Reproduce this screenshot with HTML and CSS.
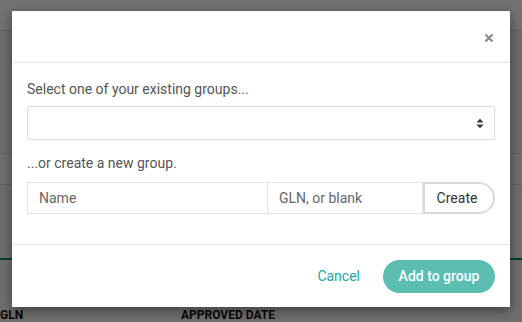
FILE: index.html
```html
<!DOCTYPE html>
<html>
<head>
<meta charset="utf-8">
<link rel="stylesheet" href="styles.css">
</head>
<body>
<div class="page">
  <div class="topbar"></div>
  <div class="area1"></div>
  <div class="band"></div>
  <div class="area2"></div>
  <div class="tabline"></div>
  <div class="spacer"></div>
  <div class="thead">
    <span class="th th-gln">GLN</span>
    <span class="th">APPROVED DATE</span>
  </div>
</div>
<div class="overlay"></div>
<div class="modal">
  <div class="modal-header">
    <button class="close" aria-label="Close">
      <svg width="10" height="10" viewBox="0 0 10 10"><path d="M1.5 1.5 L8.5 8.5 M8.5 1.5 L1.5 8.5" stroke="#8a8a8a" stroke-width="2.2" stroke-linecap="butt"/></svg>
    </button>
  </div>
  <div class="modal-body">
    <p class="label">Select one of your existing groups...</p>
    <div class="select">
      <svg class="caret" width="8" height="11" viewBox="0 0 8 11"><path d="M0.5 4.5 L4 0.8 L7.5 4.5 Z M0.5 6.5 L4 10.2 L7.5 6.5 Z" fill="#333"/></svg>
    </div>
    <p class="label label2">...or create a new group.</p>
    <div class="input-group">
      <div class="field field-name">Name</div>
      <div class="field field-gln">GLN, or blank</div>
      <div class="btn-create">Create</div>
    </div>
  </div>
  <div class="modal-footer">
    <span class="cancel">Cancel</span>
    <span class="add">Add to group</span>
  </div>
</div>
</body>
</html>
```
FILE: styles.css
```css
html, body {
  margin: 0;
  padding: 0;
}
body {
  width: 522px;
  height: 322px;
  overflow: hidden;
  position: relative;
  font-family: Roboto, "Liberation Sans", sans-serif;
  background: #d8d8d8;
}
.page {
  display: flex;
  flex-direction: column;
  height: 322px;
  background: #f4f4f4;
}
.topbar {
  height: 30px;
  background: #fcfcfc;
  border-bottom: 1px solid #d6d6d6;
}
.area1 {
  height: 124px;
  background: #f2f2f2;
}
.band {
  height: 31px;
  border-top: 1px solid #e0e0e0;
  border-bottom: 1px solid #dcdcdc;
  background: #f7f7f7;
}
.area2 {
  height: 74px;
}
.tabline {
  height: 2px;
  background: #00897b;
}
.spacer {
  height: 49px;
}
.thead {
  display: flex;
  font-size: 12px;
  font-weight: bold;
  color: #111;
  line-height: 14px;
}
.th-gln {
  width: 181px;
}
.overlay {
  position: absolute;
  inset: 0;
  background: rgba(0, 0, 0, 0.55);
}
.modal {
  position: absolute;
  left: 12px;
  top: 11px;
  width: 498px;
  height: 296px;
  background: #fff;
  box-shadow: 0 3px 12px rgba(0, 0, 0, 0.45);
  display: flex;
  flex-direction: column;
  border-radius: 1px;
}
.modal-header {
  height: 51px;
  border-bottom: 1px solid #e5e5e5;
  display: flex;
  justify-content: flex-end;
  align-items: center;
  padding: 0 15px 0 0;
}
.close {
  border: 0;
  background: none;
  padding: 0;
  margin-top: 3px;
  width: 12px;
  height: 12px;
  display: flex;
  align-items: center;
  justify-content: center;
}
.modal-body {
  padding: 0 15px;
  height: 181px;
  border-bottom: 1px solid #e5e5e5;
}
.label {
  margin: 0;
  font-size: 14px;
  color: #555;
  line-height: 16px;
}
.modal-body > .label:first-child {
  margin-top: 18px;
}
.select {
  margin-top: 9px;
  height: 32px;
  border: 1px solid #dcdcdc;
  border-radius: 2px;
  display: flex;
  justify-content: flex-end;
  align-items: center;
  padding-right: 10px;
}
.label2 {
  margin-top: 15px;
}
.input-group {
  margin-top: 11px;
  display: flex;
  height: 32px;
}
.field {
  border: 1px solid #e3e3e3;
  font-size: 14px;
  color: #666;
  display: flex;
  align-items: center;
  padding-left: 11px;
}
.field-name {
  width: 228px;
}
.field-gln {
  width: 143px;
  border-left: 0;
  border-right: 1px solid #e3e3e3;
}
.btn-create {
  flex: 1;
  border: 2px solid #d9d9d9;
  border-radius: 0 17px 17px 0;
  font-size: 14px;
  color: #333;
  display: flex;
  align-items: center;
  justify-content: center;
  padding-right: 4px;
}
.modal-footer {
  flex: 1;
  display: flex;
  justify-content: flex-end;
  align-items: center;
  padding: 0 15px 0 0;
  gap: 23px;
}
.cancel {
  font-size: 14px;
  color: #26a69a;
}
.add {
  background: #5cbdb1;
  color: #fff;
  font-size: 14px;
  font-weight: 500;
  height: 33px;
  width: 112px;
  border-radius: 17px;
  display: flex;
  align-items: center;
  justify-content: center;
}
```
